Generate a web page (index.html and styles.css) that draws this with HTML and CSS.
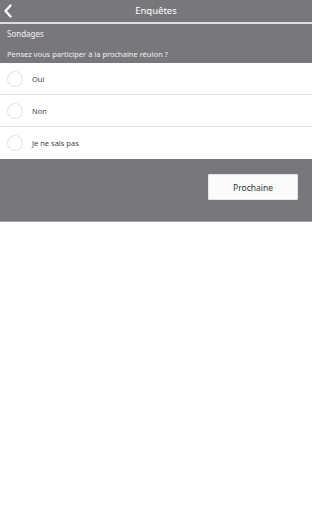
FILE: index.html
```html
<!DOCTYPE html>
<html lang="fr">
<head>
<meta charset="utf-8">
<link rel="stylesheet" href="styles.css">
</head>
<body>
<div class="app">
  <header class="topbar">
    <span class="back"><svg width="10" height="14" viewBox="0 0 10 14"><path d="M7.5 1.5 L2.5 7 L7.5 12.5" fill="none" stroke="#fff" stroke-width="2.2" stroke-linecap="round" stroke-linejoin="round"/></svg></span>
    <h1 class="title">Enquêtes</h1>
  </header>
  <div class="divider"></div>
  <section class="intro">
    <div class="section-name">Sondages</div>
    <div class="question">Pensez vous participer à la prochaine réuion ?</div>
  </section>
  <ul class="options">
    <li class="option"><span class="radio"></span><span class="label">Oui</span></li>
    <li class="option"><span class="radio"></span><span class="label">Non</span></li>
    <li class="option"><span class="radio"></span><span class="label">Je ne sais pas</span></li>
  </ul>
  <footer class="actions">
    <button class="next">Prochaine</button>
  </footer>
</div>
</body>
</html>
```
FILE: styles.css
```css
html, body {
  margin: 0;
  padding: 0;
  background: #fff;
}
body {
  font-family: "Noto Sans", "Open Sans", sans-serif;
  width: 312px;
  height: 512px;
}
.app {
  display: flex;
  flex-direction: column;
}
.topbar {
  position: relative;
  height: 22px;
  background: #78777c;
  display: flex;
  align-items: center;
  justify-content: center;
}
.back {
  position: absolute;
  left: 3px;
  top: 4px;
  display: flex;
}
.title {
  margin: 0;
  font-size: 9.5px;
  font-weight: normal;
  color: #fff;
  line-height: 22px;
}
.divider {
  height: 2px;
  background: #dedede;
}
.intro {
  background: #78777c;
  padding: 0 7px;
  height: 39px;
  display: flex;
  flex-direction: column;
}
.section-name {
  font-size: 8px;
  color: #f2f2f2;
  line-height: 12px;
  margin-top: 4px;
}
.question {
  font-size: 7.5px;
  color: #f2f2f2;
  line-height: 10px;
  margin-top: 9px;
}
.options {
  list-style: none;
  margin: 0;
  padding: 0;
  background: #fff;
}
.option {
  height: 31px;
  border-bottom: 1px solid #e4e4e4;
  display: flex;
  align-items: center;
}
.option:last-child {
  border-bottom: none;
  height: 32px;
}
.radio {
  box-sizing: border-box;
  width: 16px;
  height: 16px;
  border: 1px solid #e2e2e2;
  border-radius: 50%;
  margin-left: 7px;
}
.label {
  margin-left: 9px;
  font-size: 7.5px;
  color: #444;
}
.actions {
  background: #78777c;
  border-bottom: 1px solid #a8a7ab;
  display: flex;
  justify-content: flex-end;
  align-items: flex-start;
  padding-right: 14px;
  padding-top: 15px;
  box-sizing: border-box;
  height: 63px;
}
.next {
  width: 90px;
  height: 26px;
  background: #fbfbfb;
  border: 1px solid #e6e6e6;
  border-radius: 1px;
  font-family: "Noto Sans", "Open Sans", sans-serif;
  font-size: 8.5px;
  color: #333;
  padding: 0;
}
```
